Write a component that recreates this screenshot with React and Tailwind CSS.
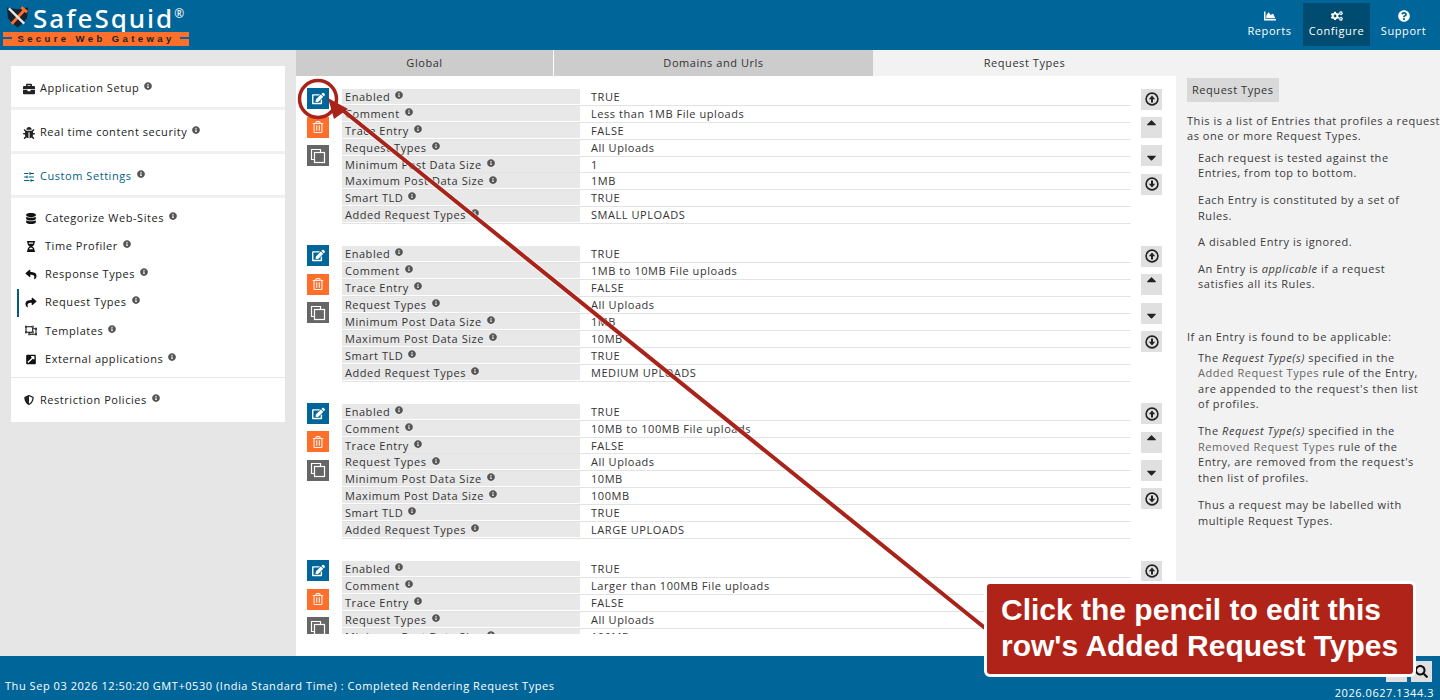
import {
  FaBriefcase, FaBug, FaDatabase, FaHourglassHalf, FaReply, FaShare, FaRegObjectUngroup,
  FaExternalLinkSquareAlt, FaShieldAlt, FaInfoCircle, FaEdit, FaRegTrashAlt,
  FaCaretUp, FaCaretDown, FaChartArea, FaCogs, FaQuestionCircle, FaSearch,
} from "react-icons/fa";
import { SlidersHorizontal } from "lucide-react";

const ENTRIES = [
  { comment: "Less than 1MB File uploads", min: "1", max: "1MB", added: "SMALL UPLOADS", rows: 8 },
  { comment: "1MB to 10MB File uploads", min: "1MB", max: "10MB", added: "MEDIUM UPLOADS", rows: 8 },
  { comment: "10MB to 100MB File uploads", min: "10MB", max: "100MB", added: "LARGE UPLOADS", rows: 8 },
  // last one runs under the scroll edge
  { comment: "Larger than 100MB File uploads", min: "100MB", max: "", added: "", rows: 5 },
];

const TOP_MENU = [
  { label: "Application Setup", icon: FaBriefcase },
  { label: "Real time content security", icon: FaBug },
  { label: "Custom Settings", icon: SlidersHorizontal, active: true },
];

const SUB_MENU = [
  { label: "Categorize Web-Sites", icon: FaDatabase },
  { label: "Time Profiler", icon: FaHourglassHalf },
  { label: "Response Types", icon: FaReply },
  { label: "Request Types", icon: FaShare, active: true },
  { label: "Templates", icon: FaRegObjectUngroup },
  { label: "External applications", icon: FaExternalLinkSquareAlt },
];

function Info() {
  return <FaInfoCircle className="inline-block ml-[5px] mb-[6px] text-[8px] text-[#555]" />;
}

function NavButton({ icon: Icon, label, active }) {
  return (
    <div className={`w-[67px] h-[43px] mt-[3px] pt-[1px] flex flex-col items-center justify-center ${active ? "bg-[#004c70]" : ""}`}>
      <Icon className="text-[12px] text-white" />
      <span className="text-[11px] leading-[18px] text-white tracking-[0.6px]">{label}</span>
    </div>
  );
}

function Field({ label, value }) {
  return (
    <div className="h-[16.9px] flex border-b border-[#e3e3e3] text-[11px] leading-[15px] text-[#333] tracking-[0.55px]">
      <div className="w-[238px] h-[15px] pl-[3px] bg-[#e8e8e8] whitespace-nowrap overflow-hidden">
        {label}
        <Info />
      </div>
      <div className="pl-[11px] h-[15px] whitespace-nowrap">{value}</div>
    </div>
  );
}

function SideButton({ className, children }) {
  return <div className={`w-[21px] h-[21px] flex items-center justify-center ${className}`}>{children}</div>;
}

function CopyIcon() {
  return (
    <svg width="16" height="16" viewBox="0 0 16 16" fill="none" stroke="white" strokeWidth="1.2">
      <path d="M10.5 4.5 V1.5 H1.5 V11.5 H4.5" />
      <rect x="4.5" y="4.5" width="10" height="10" />
    </svg>
  );
}

// ring with a bold arrow, down = flipped
function CircleArrow({ down }) {
  return (
    <svg width="14" height="14" viewBox="0 0 14 14" fill="none" stroke="#222" strokeWidth="1.6" className={down ? "rotate-180" : ""}>
      <circle cx="7" cy="7" r="5.9" />
      <path d="M7 10.5 V5.5" strokeWidth="2" />
      <path d="M3.8 7.2 L7 3.4 L10.2 7.2 Z" fill="#222" stroke="none" />
    </svg>
  );
}

function Entry({ entry }) {
  const fields = [
    ["Enabled", "TRUE"],
    ["Comment", entry.comment],
    ["Trace Entry", "FALSE"],
    ["Request Types", "All Uploads"],
    ["Minimum Post Data Size", entry.min],
    ["Maximum Post Data Size", entry.max],
    ["Smart TLD", "TRUE"],
    ["Added Request Types", entry.added],
  ].slice(0, entry.rows);

  return (
    <div className="h-[157.4px] flex">
      <div className="w-[46px] pl-[11px] -mt-[1px] flex flex-col gap-[7.5px]">
        <SideButton className="bg-[#006699] w-[22px]"><FaEdit className="text-[13px] text-white" /></SideButton>
        <SideButton className="bg-[#ff6f2c] w-[22px]"><FaRegTrashAlt className="text-[12px] text-white/90" /></SideButton>
        <SideButton className="bg-[#666666] w-[22px]"><CopyIcon /></SideButton>
      </div>
      <div className="w-[789px]">
        {fields.map(([label, value]) => <Field key={label} label={label} value={value} />)}
      </div>
      <div className="ml-[10px] -mt-[0.5px] flex flex-col gap-[7.4px] text-[#222]">
        <SideButton className="bg-[#e0e0e0]"><CircleArrow /></SideButton>
        <SideButton className="bg-[#e0e0e0]"><FaCaretUp className="text-[15px] -translate-y-[5px]" /></SideButton>
        <SideButton className="bg-[#e0e0e0]"><FaCaretDown className="text-[15px] translate-y-[2px]" /></SideButton>
        <SideButton className="bg-[#e0e0e0]"><CircleArrow down /></SideButton>
      </div>
    </div>
  );
}

export default function App() {
  return (
    <div className="relative w-[1440px] h-[700px] overflow-hidden flex flex-col bg-[#e6e6e6] font-['Open_Sans','Noto_Sans',sans-serif]">
      {/* Header */}
      <header className="h-[50px] shrink-0 bg-[#006699] flex justify-between">
        <div className="pl-[3px] w-[192px]">
          <div className="h-[31px] flex items-center pl-[3px]">
            <svg width="23" height="24" viewBox="0 0 24 24" className="shrink-0">
              <path d="M1 3 L12 5 L23 3 L22 14 Q18 20 12 24 Q6 20 2 14 Z" fill="#16222e" />
              <path d="M6 20 L20 5 M16 3 L22 8" stroke="#ff6f2c" strokeWidth="3" fill="none" />
              <path d="M3 4 L19 20" stroke="#e8e8e8" strokeWidth="2.5" fill="none" />
            </svg>
            <span className="ml-[4px] text-[26px] leading-[30px] text-white font-medium tracking-[2px] font-['Noto_Sans',sans-serif] whitespace-nowrap">SafeSquid<span className="align-[10px] text-[12px] font-normal tracking-normal">®</span></span>
          </div>
          <div className="relative h-[14px] mt-px w-[186px] bg-[#ff6f2c] text-center text-[9.5px] leading-[14px] font-bold tracking-[3.4px] text-[#222] font-['Liberation_Sans',sans-serif]">
            <div className="absolute left-0 top-[5px] w-[9px] h-[2px] bg-[#006699]" />
            <div className="absolute right-0 top-[5px] w-[9px] h-[2px] bg-[#006699]" />
            Secure Web Gateway
          </div>
        </div>
        <div className="flex pr-[3px]">
          <NavButton icon={FaChartArea} label="Reports" />
          <NavButton icon={FaCogs} label="Configure" active />
          <NavButton icon={FaQuestionCircle} label="Support" />
        </div>
      </header>

      <div className="flex-1 min-h-0 flex">
        {/* Left menu */}
        <aside className="w-[296px] shrink-0 pl-[11px] pr-[11px] pt-[16px] text-[11px] tracking-[0.55px] text-[#222]">
          <div className="bg-white">
            {TOP_MENU.map(item => (
              <div key={item.label} className={`h-[44px] pt-[4px] flex items-center pl-[12px] border-b-[3px] border-[#f0f0f0] ${item.active ? "text-[#005f7f]" : ""}`}>
                <item.icon className="text-[11px] mr-[5px] w-[12px] h-[12px]" />
                <span className="whitespace-nowrap">{item.label}<Info /></span>
              </div>
            ))}
            <div className="pt-[6px] pb-[4px] border-b border-[#e8e8e8]">
              {SUB_MENU.map(item => (
                <div key={item.label} className="relative h-[28.2px] flex items-center pl-[14px]">
                  {item.active && <div className="absolute left-[6px] top-0 w-[2px] h-[28px] bg-[#005f7f]" />}
                  <item.icon className="text-[11px] mr-[8px] w-[12px] text-[#111]" />
                  <span className="whitespace-nowrap">{item.label}<Info /></span>
                </div>
              ))}
            </div>
            <div className="h-[44px] flex items-center pl-[12px]">
              <FaShieldAlt className="text-[10px] mr-[5px] w-[12px]" />
              <span>Restriction Policies<Info /></span>
            </div>
          </div>
        </aside>

        {/* Main */}
        <main className="w-[880px] shrink-0 bg-white flex flex-col">
          <div className="h-[26px] shrink-0 flex text-[11px] tracking-[0.55px] text-[#333]">
            <div className="w-[258px] bg-[#cccccc] border-r border-white flex items-center justify-center">Global</div>
            <div className="w-[319px] bg-[#cccccc] flex items-center justify-center">Domains and Urls</div>
            <div className="flex-1 bg-[#f2f2f2] flex items-center justify-center">Request Types</div>
          </div>
          <div className="h-[558px] overflow-hidden pt-[13px]">
            {ENTRIES.map((e, i) => <Entry key={i} entry={e} />)}
          </div>
        </main>

        {/* Help */}
        <section className="flex-1 min-w-0 bg-[#f2f2f2] pl-[11px] pt-[28px] text-[11px] leading-[15.6px] tracking-[0.55px] text-[#3a3a3a] whitespace-nowrap overflow-hidden">
          <div className="inline-block h-[24px] px-[5px] leading-[24px] bg-[#d9d9d9] text-[#333]">Request Types</div>
          <p className="mt-[10.6px]">This is a list of Entries that profiles a request<br />as one or more Request Types.</p>
          <div className="pl-[11px] mt-[6px]">
            <p>Each request is tested against the<br />Entries, from top to bottom.</p>
            <p className="mt-[11px]">Each Entry is constituted by a set of<br />Rules.</p>
            <p className="mt-[11px]">A disabled Entry is ignored.</p>
            <p className="mt-[11px]">An Entry is <em>applicable</em> if a request<br />satisfies all its Rules.</p>
          </div>
          <p className="mt-[36.6px]">If an Entry is found to be applicable:</p>
          <div className="pl-[11px] mt-[5.4px]">
            <p>The <em>Request Type(s)</em> specified in the<br /><span className="text-[#666]">Added Request Types</span> rule of the Entry,<br />are appended to the request's then list<br />of profiles.</p>
            <p className="mt-[11.4px]">The <em>Request Type(s)</em> specified in the<br /><span className="text-[#666]">Removed Request Types</span> rule of the<br />Entry, are removed from the request's<br />then list of profiles.</p>
            <p className="mt-[11.4px]">Thus a request may be labelled with<br />multiple Request Types.</p>
          </div>
        </section>
      </div>

      {/* Footer */}
      <footer className="absolute left-0 right-0 bottom-0 h-[44px] bg-[#006699] text-white text-[11px] tracking-[0.55px]">
        <div className="absolute left-[5px] top-[22px] whitespace-nowrap">Thu Sep 03 2026 12:50:20 GMT+0530 (India Standard Time) : Completed Rendering Request Types</div>
        <div className="absolute right-[6px] top-[29px]">2026.0627.1344.3</div>
        <div className="absolute right-[8px] top-[5px] w-[21px] h-[21px] bg-[#e0e0e0] flex items-center justify-center"><FaSearch className="text-[13px] text-[#111]" /></div>
        <div className="absolute right-[33px] top-[5px] w-[21px] h-[21px] bg-[#e0e0e0]" />
      </footer>

      {/* Annotation */}
      <svg className="absolute inset-0 pointer-events-none" width="1440" height="700">
        <circle cx="318" cy="99" r="18.5" fill="none" stroke="#a8231a" strokeWidth="3.5" />
        <line x1="985" y1="628" x2="340" y2="108" stroke="#ffffff" strokeOpacity="0.5" strokeWidth="6" />
        <line x1="985" y1="628" x2="340" y2="108" stroke="#a8231a" strokeWidth="4" />
        <path d="M328 98 L348 109 L334 119 Z" fill="#a8231a" />
      </svg>
      <div className="absolute left-[984px] top-[581px] w-[432px] h-[96px] bg-[#b02318] border-[3px] border-white rounded-[6px] pl-[14px] pt-[8px] text-white text-[30px] leading-[36px] font-bold font-['Liberation_Sans',sans-serif] whitespace-nowrap">
        Click the pencil to edit this<br />row's Added Request Types
      </div>
    </div>
  );
}
